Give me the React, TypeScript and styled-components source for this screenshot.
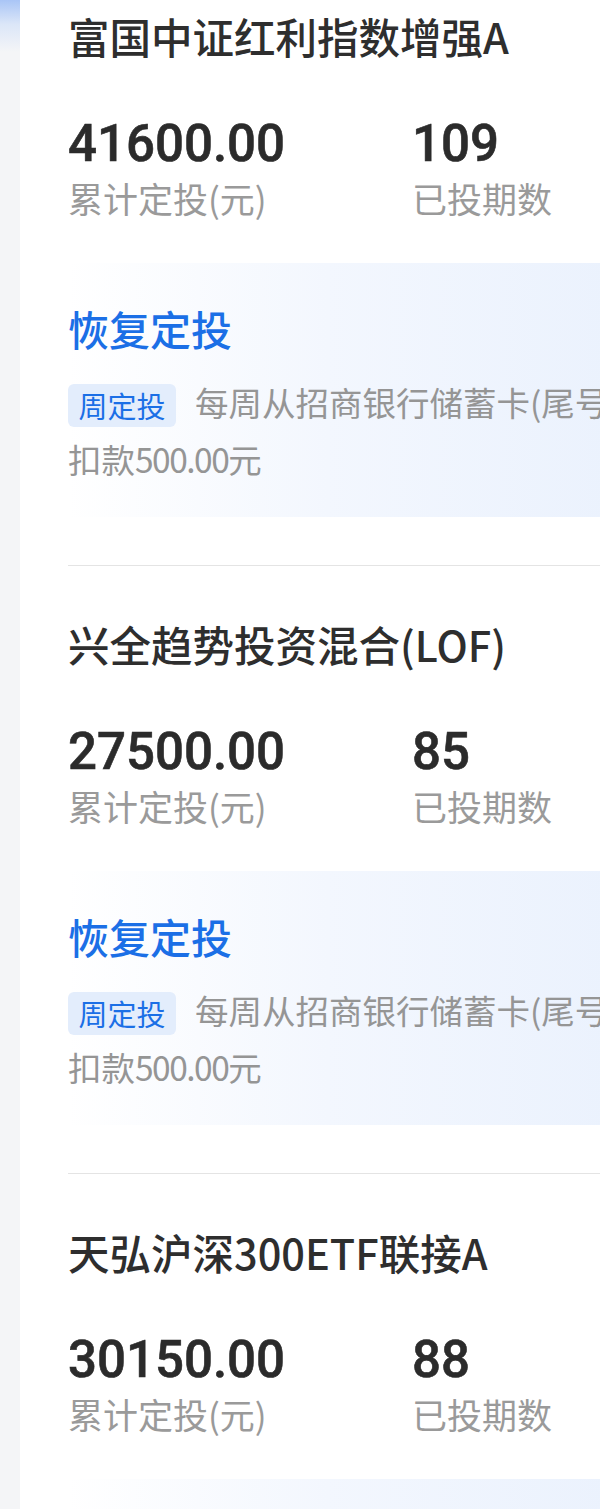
import React from 'react'
import styled, { createGlobalStyle } from 'styled-components'

const funds = [
  { key: 1, name: '富国中证红利指数增强A', total: '41600.00', periods: '109' },
  { key: 2, name: '兴全趋势投资混合(LOF)', total: '27500.00', periods: '85' },
  { key: 3, name: '天弘沪深300ETF联接A', total: '30150.00', periods: '88' }
]

const GlobalStyle = createGlobalStyle`
  html, body {
    margin: 0;
    padding: 0;
  }
  body {
    width: 600px;
    overflow: hidden;
    background: linear-gradient(180deg, #a9c5f6 0px, #dbe6f8 24px, #f4f5f7 52px, #f4f5f7 100%);
    font-family: "Noto Sans CJK SC", "Noto Sans", sans-serif;
  }
`

const Page = styled.div`
  width: 600px;
  height: 1509px;
  overflow: hidden;
  padding-left: 20px;
  box-sizing: border-box;
`

const Card = styled.div`
  width: 700px;
  min-height: 1509px;
  background: #fff;
  padding: 0 5px 0 48px;
  box-sizing: border-box;
`

const FundItem = styled.div<{ $first?: boolean }>`
  padding: ${p => (p.$first ? '8px' : '50px')} 0 48px;
  border-bottom: 1px solid #e4e4e4;
`

const FundName = styled.div`
  font-size: 41.5px;
  line-height: 56px;
  font-weight: 500;
  color: #2e2e2e;
  white-space: nowrap;
`

const StatsRow = styled.div`
  display: grid;
  grid-template-columns: 344px auto;
  margin-top: 50px;
`

const Stat = styled.div`
  display: flex;
  flex-direction: column;
`

const StatValue = styled.div`
  font-family: Roboto, "Noto Sans", sans-serif;
  font-size: 51px;
  line-height: 60px;
  font-weight: 500;
  color: #2b2b2b;
  -webkit-text-stroke: 0.6px #2b2b2b;
`

const StatLabel = styled.div`
  margin-top: 2px;
  font-size: 35px;
  line-height: 44px;
  color: #9a9a9a;
`

const PlanPanel = styled.div`
  margin-top: 43px;
  padding: 37px 0 30px;
  background: linear-gradient(90deg, #ffffff 0%, #f3f7fe 40%, #e8f0fd 100%);
`

const ResumeButton = styled.div`
  font-size: 41px;
  line-height: 56px;
  font-weight: 500;
  color: #1b6fe6;
`

const PlanDesc = styled.div`
  margin-top: 17px;
  font-size: 33.5px;
  line-height: 57px;
  color: #959595;
`

const Amount = styled.span`
  letter-spacing: -1.5px;
`

const CycleTag = styled.span`
  display: inline-block;
  vertical-align: -2px;
  margin-right: 19px;
  padding: 0 10.5px;
  font-size: 29px;
  line-height: 43px;
  color: #1b6fe6;
  background: #e3edfc;
  border-radius: 6px;
`

export default function App() {
  return (
    <>
      <GlobalStyle />
      <Page>
        <Card>
          {funds.map((fund, i) => (
            <FundItem key={fund.key} $first={i === 0}>
              <FundName>{fund.name}</FundName>
              <StatsRow>
                <Stat>
                  <StatValue>{fund.total}</StatValue>
                  <StatLabel>累计定投(元)</StatLabel>
                </Stat>
                <Stat>
                  <StatValue>{fund.periods}</StatValue>
                  <StatLabel>已投期数</StatLabel>
                </Stat>
              </StatsRow>
              <PlanPanel>
                <ResumeButton>恢复定投</ResumeButton>
                <PlanDesc>
                  <CycleTag>周定投</CycleTag>
                  每周从招商银行储蓄卡(尾号8848)扣款<Amount>500.00</Amount>元
                </PlanDesc>
              </PlanPanel>
            </FundItem>
          ))}
        </Card>
      </Page>
    </>
  )
}
